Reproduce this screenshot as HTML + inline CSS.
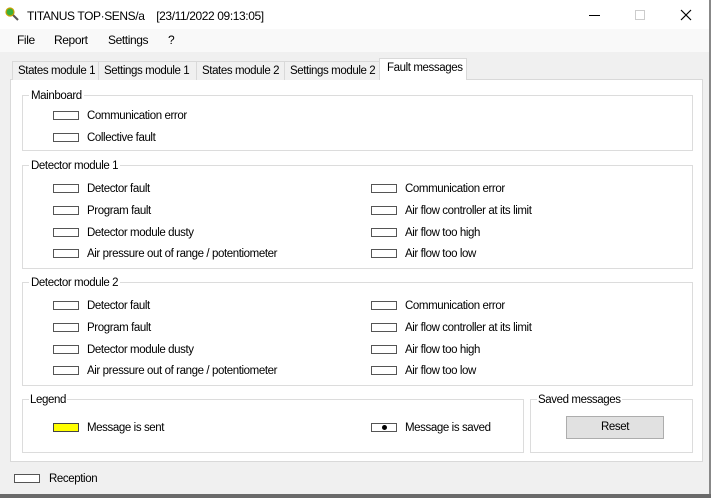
<!DOCTYPE html><html><head><style>
*{margin:0;padding:0;box-sizing:border-box}
body{width:711px;height:498px;background:#f0f0f0;position:relative;overflow:hidden;font-family:"Liberation Sans",sans-serif;font-size:11.5px;color:#000;letter-spacing:-0.4px}
.a{position:absolute;white-space:nowrap;line-height:17px}
.ind{position:absolute;width:26px;height:9px;border:1px solid #555;background:#fff}
.g{position:absolute;border:1px solid #dcdcdc}
.gl{position:absolute;background:#fff;padding:0 2px;line-height:14px;top:-7px;left:6px}
.t{position:absolute;top:61px;height:19px;border:1px solid #d9d9d9;border-bottom:none;background:#f0f0f0;line-height:19px;padding-left:5px;overflow:hidden;white-space:nowrap}
</style></head><body>
<div class="a" style="left:0;top:0;width:711px;height:29px;background:#fff"></div>
<div class="a" style="left:0;top:29px;width:711px;height:23px;background:#f9f9f9"></div>
<svg class="a" style="left:4px;top:6px" width="16" height="16"><line x1="7" y1="7" x2="14" y2="14" stroke="#555" stroke-width="2"/><circle cx="6" cy="6" r="4" fill="#3ab03a" stroke="#c8a000" stroke-width="1.2"/></svg>
<div class="a" style="left:27px;top:8px;font-size:12px">TITANUS TOP·SENS/a &nbsp;&nbsp;&nbsp;[23/11/2022 09:13:05]</div>
<div class="a" style="left:589px;top:15px;width:11px;height:1px;background:#000"></div>
<div class="a" style="left:635px;top:10px;width:10px;height:10px;border:1px solid #ccc"></div>
<svg class="a" style="left:680px;top:9px" width="12" height="12"><path d="M1 1L11 11M11 1L1 11" stroke="#000" stroke-width="1.2"/></svg>
<div class="a" style="left:709px;top:0;width:2px;height:498px;background:#888"></div>
<div class="a" style="left:17px;top:32px;font-size:12px">File</div>
<div class="a" style="left:54px;top:32px;font-size:12px">Report</div>
<div class="a" style="left:108px;top:32px;font-size:12px">Settings</div>
<div class="a" style="left:168px;top:32px;font-size:12px">?</div>
<div class="a" style="left:10px;top:79px;width:693px;height:383px;background:#fff;border:1px solid #d9d9d9"></div>
<div class="t" style="left:12px;width:87px">States module 1</div>
<div class="t" style="left:98px;width:99px">Settings module 1</div>
<div class="t" style="left:196px;width:89px">States module 2</div>
<div class="t" style="left:284px;width:96px">Settings module 2</div>
<div class="t" style="left:379px;top:58px;width:88px;height:22px;background:#fff;line-height:19px;padding-left:7px">Fault messages</div>

<div class="g" style="left:22px;top:95px;width:671px;height:56px"><div class="gl">Mainboard</div></div>
<div class="ind" style="left:53px;top:111px"></div><div class="a" style="left:87px;top:108px">Communication error</div>
<div class="ind" style="left:53px;top:133px"></div><div class="a" style="left:87px;top:130px">Collective fault</div>

<div class="g" style="left:22px;top:165px;width:671px;height:104px"><div class="gl">Detector module 1</div></div>
<div class="g" style="left:22px;top:282px;width:671px;height:104px"><div class="gl">Detector module 2</div></div>
<div class="ind" style="left:53px;top:184px"></div><div class="a" style="left:87px;top:181px">Detector fault</div>
<div class="ind" style="left:53px;top:206px"></div><div class="a" style="left:87px;top:203px">Program fault</div>
<div class="ind" style="left:53px;top:228px"></div><div class="a" style="left:87px;top:225px">Detector module dusty</div>
<div class="ind" style="left:53px;top:249px"></div><div class="a" style="left:87px;top:246px">Air pressure out of range / potentiometer</div>
<div class="ind" style="left:371px;top:184px"></div><div class="a" style="left:405px;top:181px">Communication error</div>
<div class="ind" style="left:371px;top:206px"></div><div class="a" style="left:405px;top:203px">Air flow controller at its limit</div>
<div class="ind" style="left:371px;top:228px"></div><div class="a" style="left:405px;top:225px">Air flow too high</div>
<div class="ind" style="left:371px;top:249px"></div><div class="a" style="left:405px;top:246px">Air flow too low</div>
<div class="ind" style="left:53px;top:301px"></div><div class="a" style="left:87px;top:298px">Detector fault</div>
<div class="ind" style="left:53px;top:323px"></div><div class="a" style="left:87px;top:320px">Program fault</div>
<div class="ind" style="left:53px;top:345px"></div><div class="a" style="left:87px;top:342px">Detector module dusty</div>
<div class="ind" style="left:53px;top:366px"></div><div class="a" style="left:87px;top:363px">Air pressure out of range / potentiometer</div>
<div class="ind" style="left:371px;top:301px"></div><div class="a" style="left:405px;top:298px">Communication error</div>
<div class="ind" style="left:371px;top:323px"></div><div class="a" style="left:405px;top:320px">Air flow controller at its limit</div>
<div class="ind" style="left:371px;top:345px"></div><div class="a" style="left:405px;top:342px">Air flow too high</div>
<div class="ind" style="left:371px;top:366px"></div><div class="a" style="left:405px;top:363px">Air flow too low</div>

<div class="g" style="left:22px;top:399px;width:502px;height:54px"><div class="gl" style="left:6px;padding:0 1px">Legend</div></div>
<div class="g" style="left:530px;top:399px;width:163px;height:54px"><div class="gl" style="left:6px;padding:0 1px">Saved messages</div></div>
<div class="ind" style="left:53px;top:423px;background:#ff0;border-color:#444"></div><div class="a" style="left:87px;top:420px">Message is sent</div>
<div class="ind" style="left:371px;top:423px"></div><div class="a" style="left:382px;top:425px;width:5px;height:5px;border-radius:50%;background:#000"></div><div class="a" style="left:405px;top:420px">Message is saved</div>
<div class="a" style="left:566px;top:416px;width:98px;height:23px;background:#e1e1e1;border:1px solid #adadad;text-align:center;line-height:21px">Reset</div>

<div class="ind" style="left:14px;top:474px"></div><div class="a" style="left:49px;top:471px">Reception</div>
<div class="a" style="left:0;top:494px;width:711px;height:4px;background:#6a6a6a"></div>
</body></html>
